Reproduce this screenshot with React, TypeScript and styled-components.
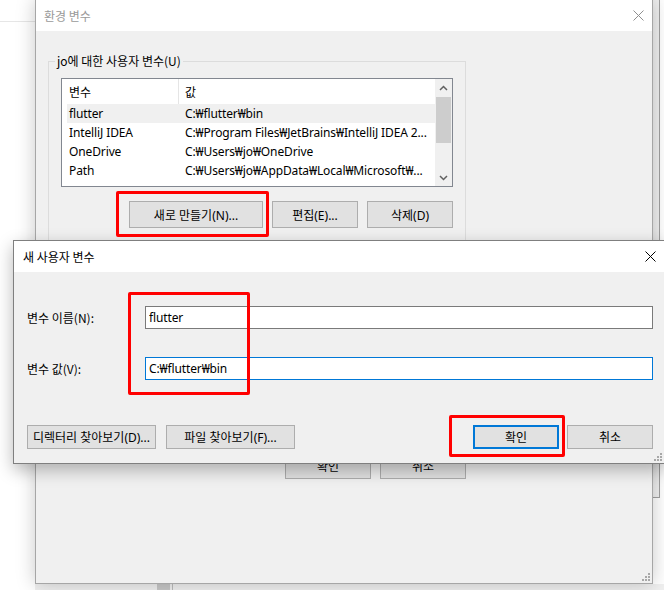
import React from "react"
import styled, { createGlobalStyle } from "styled-components"

const GlobalStyle = createGlobalStyle`
  html,
  body {
    margin: 0;
    padding: 0;
    background: #ffffff;
  }

  body {
    font-family: "Noto Sans", "Noto Sans CJK KR", sans-serif;
    font-size: 12px;
    color: #000;
  }
`

const Desktop = styled.div`
  position: relative;
  width: 664px;
  height: 590px;
  overflow: hidden;
  background: #ffffff;
`

// windows lying on the desktop, their place is the content
const Win = styled.div<{ $x: number; $y: number; $w: number; $h: number; $z: number }>`
  position: absolute;
  left: ${(p) => p.$x}px;
  top: ${(p) => p.$y}px;
  width: ${(p) => p.$w}px;
  height: ${(p) => p.$h}px;
  z-index: ${(p) => p.$z};
  box-sizing: border-box;
  display: flex;
  flex-direction: column;
`

const LeftWin = styled(Win)`
  background: #ffffff;
`

const LeftWinHeader = styled.div`
  height: 21px;
  border-bottom: 1px solid #e6e6e6;
`

const RightWin = styled(Win)`
  background: #f0f0f0;
  border: 1px solid #a0a0a0;
`

const BottomWin = styled(Win)`
  flex-direction: row;
  background: #f0f0f0;
`

const BottomStub = styled.div`
  margin-left: 122px;
  width: 13px;
  background: #c8c8c8;
  border-right: 2px solid #f0f0f0;
  box-shadow: 1px 0 0 #bdbdbd;
`

const Dialog = styled(Win)<{ $front?: boolean }>`
  background: #f0f0f0;
  border: 1px solid ${(p) => (p.$front ? "#7f7f7f" : "#a6a6a6")};
  box-shadow: ${(p) =>
    p.$front
      ? "0 6px 16px rgba(0, 0, 0, 0.28)"
      : "0 0 18px rgba(0, 0, 0, 0.22)"};
`

const TitleBar = styled.div<{ $active?: boolean }>`
  flex: 0 0 31px;
  display: flex;
  align-items: center;
  justify-content: space-between;
  padding-left: ${(p) => (p.$active ? 9 : 8)}px;
  background: #ffffff;
  color: ${(p) => (p.$active ? "#000000" : "#9a9a9a")};
  font-family: "Noto Sans CJK KR", sans-serif;
  font-size: 12px;
  line-height: 16px;
`

const CloseBox = styled.div`
  width: 28px;
  height: 31px;
  display: flex;
  align-items: center;
  justify-content: center;
`

const Grip = styled.svg`
  position: absolute;
  right: 2px;
  bottom: 2px;
`

const BackBody = styled.div`
  flex: 1;
  display: flex;
  flex-direction: column;
  padding: 22px 0 0 12px;
`

const Column = styled.div`
  width: 418px;
  display: flex;
  flex-direction: column;
`

const Group = styled.fieldset<{ $h?: number }>`
  box-sizing: border-box;
  width: 418px;
  min-width: 0;
  height: ${(p) => (p.$h ? `${p.$h}px` : "auto")};
  margin: 0 0 ${(p) => (p.$h ? 0 : 8)}px;
  padding: 0 12px 12px;
  border: 1px solid #dcdcdc;
  overflow: hidden;
`

const Legend = styled.legend`
  margin-left: -6px;
  padding: 0 2px;
  font-family: "Noto Sans CJK KR", sans-serif;
  font-size: 12px;
  line-height: 16px;
  color: #000;
`

const ListView = styled.div`
  box-sizing: border-box;
  margin-top: 9px;
  width: 392px;
  height: 109px;
  border: 1px solid #828790;
  background: #ffffff;
  display: grid;
  grid-template-columns: 1fr 17px;
  overflow: hidden;
`

const ListBody = styled.div`
  padding-left: 5px;
  overflow: hidden;
`

const HeaderRow = styled.div`
  display: grid;
  grid-template-columns: 112px 1fr;
  height: 25px;
`

const HeaderCell = styled.div<{ $first?: boolean }>`
  display: flex;
  align-items: center;
  padding-left: ${(p) => (p.$first ? 2 : 6)}px;
  border-right: ${(p) => (p.$first ? "1px solid #e5e5e5" : "none")};
  font-family: "Noto Sans CJK KR", sans-serif;
`

const Row = styled.div<{ $selected?: boolean }>`
  display: grid;
  grid-template-columns: 112px 1fr;
  height: 19px;
  line-height: 19px;
  white-space: nowrap;
  letter-spacing: -0.12px;
  background: ${(p) => (p.$selected ? "#f0f0f0" : "transparent")};
`

const Cell = styled.div<{ $first?: boolean }>`
  padding-left: ${(p) => (p.$first ? 2 : 6)}px;
  overflow: hidden;
`

const ScrollBar = styled.div`
  display: flex;
  flex-direction: column;
  background: #f0f0f0;
`

const ScrollArrow = styled.div`
  flex: 0 0 17px;
  display: flex;
  align-items: center;
  justify-content: center;
`

const ScrollTrack = styled.div`
  flex: 1;
  padding: 1px 1px 0;
`

const Thumb = styled.div<{ $h: number }>`
  height: ${(p) => p.$h}px;
  background: #cdcdcd;
`

const ButtonRow = styled.div<{ $top: number; $gap: number }>`
  display: flex;
  justify-content: flex-end;
  gap: ${(p) => p.$gap}px;
  margin-top: ${(p) => p.$top}px;
`

const Button = styled.button<{ $w: number; $h: number; $default?: boolean }>`
  box-sizing: border-box;
  width: ${(p) => p.$w}px;
  height: ${(p) => p.$h}px;
  margin: 0;
  padding: 0;
  background: #e1e1e1;
  border: ${(p) => (p.$default ? "2px solid #0078d7" : "1px solid #adadad")};
  font-family: "Noto Sans", "Noto Sans CJK KR", sans-serif;
  font-size: 12px;
  color: #000;
  white-space: nowrap;
  overflow: hidden;
`

const FrontBody = styled.div`
  flex: 1;
  display: flex;
  flex-direction: column;
  padding: 34px 11px 14px 13px;
`

const FieldGrid = styled.div`
  display: grid;
  grid-template-columns: 118px 1fr;
  row-gap: 28px;
  align-items: center;
`

const FieldLabel = styled.label`
  font-family: "Noto Sans CJK KR", sans-serif;
  font-size: 12px;
  line-height: 16px;
`

const TextInput = styled.input<{ $focused?: boolean }>`
  box-sizing: border-box;
  width: 100%;
  height: 23px;
  margin: 0;
  padding: 0 3px;
  border: 1px solid ${(p) => (p.$focused ? "#0078d7" : "#7a7a7a")};
  background: #ffffff;
  font-family: "Noto Sans", "Noto Sans CJK KR", sans-serif;
  font-size: 12px;
  letter-spacing: -0.12px;
  color: #000;
  outline: none;
`

const BottomBar = styled.div`
  display: flex;
  justify-content: space-between;
  margin-top: 45px;
`

const BarGroup = styled.div<{ $gap: number }>`
  display: flex;
  gap: ${(p) => p.$gap}px;
`

const Highlight = styled.div<{ $x: number; $y: number; $w: number; $h: number }>`
  position: absolute;
  left: ${(p) => p.$x}px;
  top: ${(p) => p.$y}px;
  width: ${(p) => p.$w}px;
  height: ${(p) => p.$h}px;
  box-sizing: border-box;
  border: 3px solid #ff0000;
  border-radius: 2px;
  z-index: 10;
  pointer-events: none;
`

const CloseIcon = ({ color }: { color: string }) => (
  <svg width="11" height="11" viewBox="0 0 11 11">
    <path d="M0.5 0.5 L10.5 10.5 M10.5 0.5 L0.5 10.5" stroke={color} strokeWidth="1" fill="none" />
  </svg>
)

const Chevron = ({ up }: { up?: boolean }) => (
  <svg width="9" height="6" viewBox="0 0 9 6">
    <polyline
      points={up ? "1,5 4.5,1.5 8,5" : "1,1 4.5,4.5 8,1"}
      stroke="#606060"
      strokeWidth="1.5"
      fill="none"
    />
  </svg>
)

const SizeGrip = () => (
  <Grip width="8" height="8" viewBox="0 0 8 8">
    {[
      [6, 0],
      [3, 3],
      [6, 3],
      [0, 6],
      [3, 6],
      [6, 6],
    ].map(([x, y]) => (
      <rect key={`${x}-${y}`} x={x} y={y} width="2" height="2" fill="#a8a8a8" />
    ))}
  </Grip>
)

const userVars = [
  { name: "flutter", value: "C:₩flutter₩bin" },
  { name: "IntelliJ IDEA", value: "C:₩Program Files₩JetBrains₩IntelliJ IDEA 2..." },
  { name: "OneDrive", value: "C:₩Users₩jo₩OneDrive" },
  { name: "Path", value: "C:₩Users₩jo₩AppData₩Local₩Microsoft₩..." },
]

const App = () => (
  <Desktop>
    <GlobalStyle />

    <LeftWin $x={0} $y={0} $w={35} $h={590} $z={0}>
      <LeftWinHeader />
    </LeftWin>

    <RightWin $x={560} $y={-1} $w={100} $h={499} $z={1} />

    <BottomWin $x={35} $y={584} $w={629} $h={8} $z={1}>
      <BottomStub />
    </BottomWin>

    <Dialog $x={35} $y={-1} $w={618} $h={585} $z={2}>
      <TitleBar>
        <span>환경 변수</span>
        <CloseBox>
          <CloseIcon color="#8f8f8f" />
        </CloseBox>
      </TitleBar>
      <BackBody>
        <Column>
          <Group>
            <Legend>jo에 대한 사용자 변수(U)</Legend>
            <ListView>
              <ListBody>
                <HeaderRow>
                  <HeaderCell $first>변수</HeaderCell>
                  <HeaderCell>값</HeaderCell>
                </HeaderRow>
                {userVars.map((r, i) => (
                  <Row key={r.name} $selected={i === 0}>
                    <Cell $first>{r.name}</Cell>
                    <Cell>{r.value}</Cell>
                  </Row>
                ))}
              </ListBody>
              <ScrollBar>
                <ScrollArrow>
                  <Chevron up />
                </ScrollArrow>
                <ScrollTrack>
                  <Thumb $h={46} />
                </ScrollTrack>
                <ScrollArrow>
                  <Chevron />
                </ScrollArrow>
              </ScrollBar>
            </ListView>
            <ButtonRow $top={14} $gap={9}>
              <Button $w={134} $h={27}>새로 만들기(N)...</Button>
              <Button $w={86} $h={27}>편집(E)...</Button>
              <Button $w={86} $h={27}>삭제(D)</Button>
            </ButtonRow>
          </Group>
          {/* system variables group sits fully under the front dialog */}
          <Group $h={196} />
          <ButtonRow $top={7} $gap={9}>
            <Button $w={86} $h={27}>확인</Button>
            <Button $w={86} $h={27}>취소</Button>
          </ButtonRow>
        </Column>
      </BackBody>
      <SizeGrip />
    </Dialog>

    <Dialog $front $x={13} $y={240} $w={652} $h={224} $z={3}>
      <TitleBar $active>
        <span>새 사용자 변수</span>
        <CloseBox>
          <CloseIcon color="#000000" />
        </CloseBox>
      </TitleBar>
      <FrontBody>
        <FieldGrid>
          <FieldLabel>변수 이름(N):</FieldLabel>
          <TextInput defaultValue="flutter" />
          <FieldLabel>변수 값(V):</FieldLabel>
          <TextInput $focused defaultValue="C:₩flutter₩bin" />
        </FieldGrid>
        <BottomBar>
          <BarGroup $gap={10}>
            <Button $w={129} $h={24}>디렉터리 찾아보기(D)...</Button>
            <Button $w={129} $h={24}>파일 찾아보기(F)...</Button>
          </BarGroup>
          <BarGroup $gap={8}>
            <Button $w={86} $h={24} $default>확인</Button>
            <Button $w={86} $h={24}>취소</Button>
          </BarGroup>
        </BottomBar>
      </FrontBody>
      <SizeGrip />
    </Dialog>

    <Highlight $x={116} $y={191} $w={153} $h={46} />
    <Highlight $x={128} $y={292} $w={122} $h={103} />
    <Highlight $x={449} $y={415} $w={116} $h={42} />
  </Desktop>
)

export default App
